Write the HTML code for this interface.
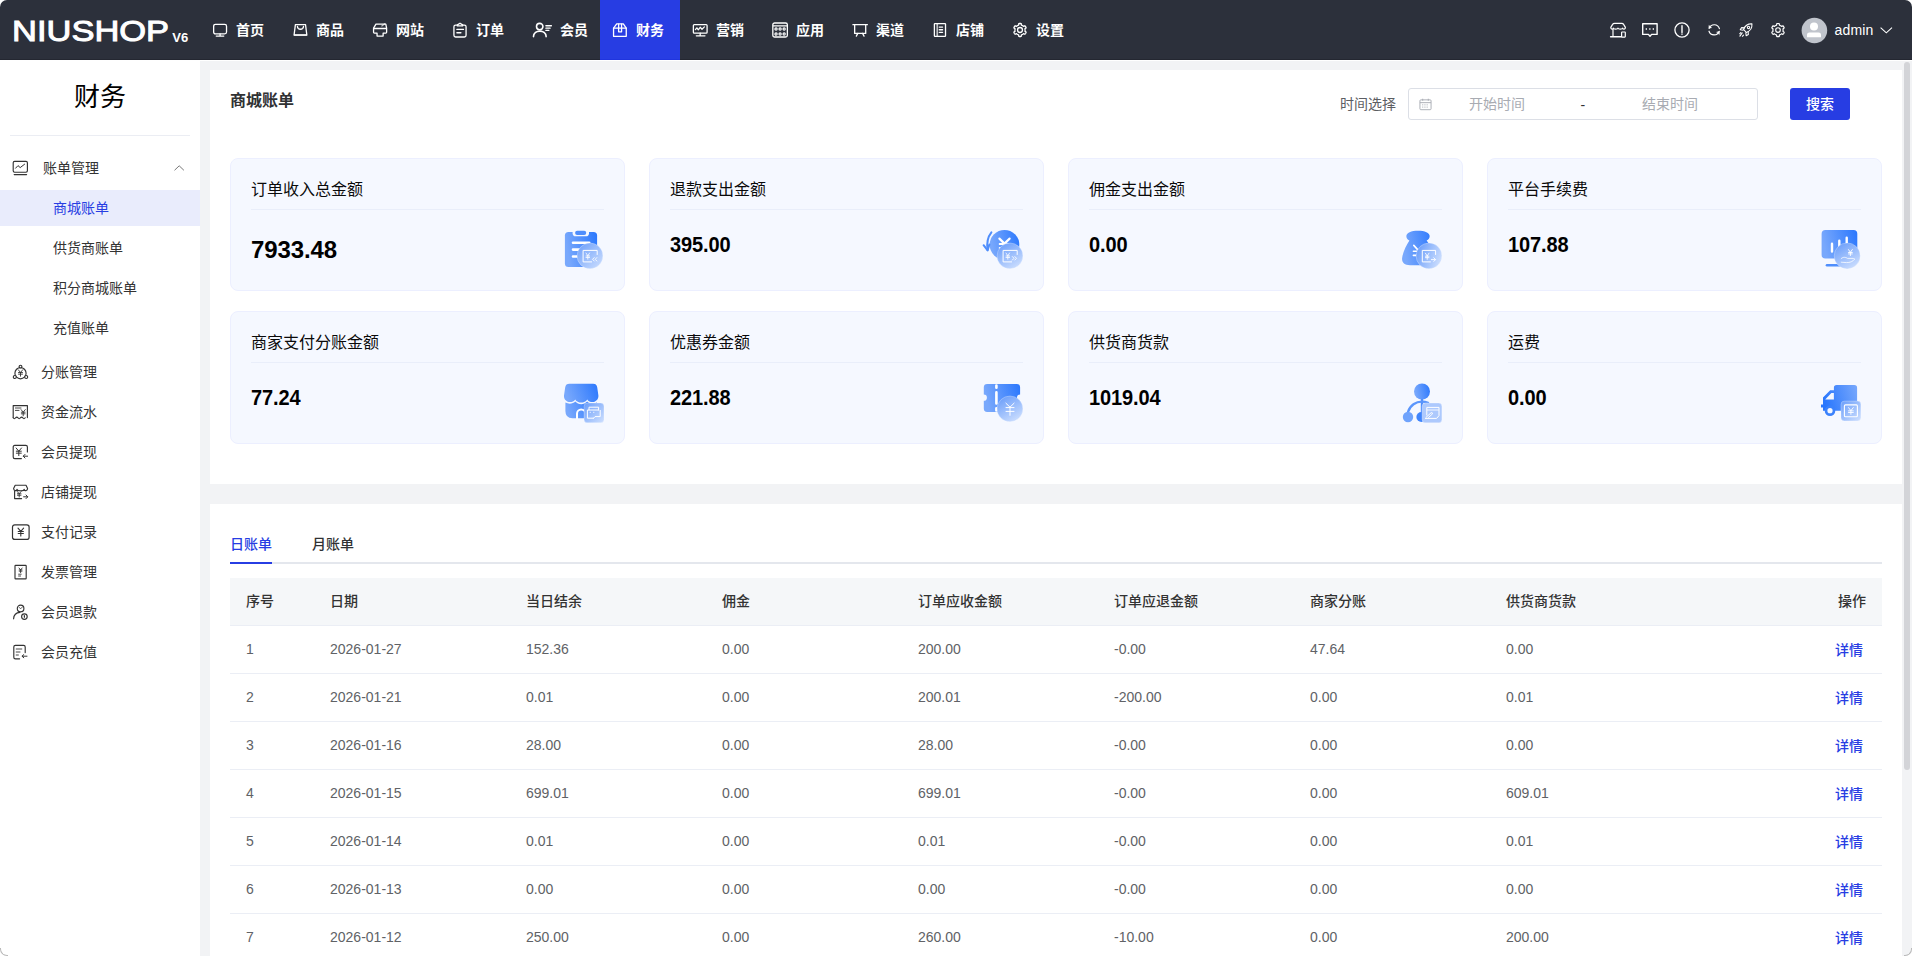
<!DOCTYPE html>
<html lang="zh-CN">
<head>
<meta charset="utf-8">
<title>商城账单</title>
<style>
*{box-sizing:border-box;margin:0;padding:0}
html,body{width:1912px;height:956px;overflow:hidden;background:#fff}
body{font-family:"Liberation Sans","Noto Sans CJK SC",sans-serif;font-size:14px;color:#333;position:relative}
#app{position:absolute;left:0;top:0;width:1912px;height:956px;background:#fff;border-radius:7px;overflow:hidden}
/* top nav */
#top{position:absolute;left:0;top:0;width:1912px;height:60px;background:#2c303b;border-bottom:1px solid #242731;z-index:5}
#logo{position:absolute;left:0;top:0}
.nav{position:absolute;top:0;height:59px;width:80px;color:#fff;font-weight:700;font-size:14px;line-height:60px}
.nav.on{background:#273de3;height:60px;border-bottom:1px solid #2035de}
.nav svg{position:absolute;left:12px;top:22px;width:16px;height:16px;fill:none;stroke:#fff;stroke-width:1.42;stroke-linecap:round;stroke-linejoin:round}
.nav span{position:absolute;left:36px;top:0;white-space:nowrap}
.ti{position:absolute;top:20px;width:20px;height:20px;fill:none;stroke:#fff;stroke-width:1.2;stroke-linecap:round;stroke-linejoin:round}
/* sidebar */
#side{position:absolute;left:0;top:60px;width:200px;height:896px;background:#fff}
#side h2{position:absolute;left:0;top:18px;width:200px;text-align:center;font-size:26px;font-weight:400;color:#000;line-height:38px}
#side .hr{position:absolute;left:10px;top:75px;width:180px;height:1px;background:#ebedf3}
.m{position:absolute;left:0;width:200px;height:40px;line-height:40px;font-size:14px;color:#333}
.m span{position:absolute;left:41px;top:0;white-space:nowrap}
.m svg{position:absolute;left:12px;top:12px;width:16px;height:16px;fill:none;stroke:#333;stroke-width:1.15;stroke-linecap:round;stroke-linejoin:round}
.s{position:absolute;left:0;width:200px;height:36px;line-height:36px;font-size:14px;color:#333}
.s span{position:absolute;left:53px;top:0;white-space:nowrap}
.s.on{background:#e9ecfc;color:#273de3}
/* main */
.panel{position:absolute;left:210px;width:1692px;background:#fff}

.tab{position:absolute;height:40px;line-height:40px;font-size:14px;font-weight:500;color:#303133;white-space:nowrap}
.tab.on{color:#273de3}
table{position:absolute;border-collapse:collapse;table-layout:fixed;width:1652px}
th{height:47px;padding-bottom:2px !important;background:#f5f7f9;font-weight:500;color:#333;text-align:left;padding:0 16px;font-size:14px;border-bottom:1px solid #ebeef5}
td{height:48px;color:#606266;text-align:left;padding:0 16px;font-size:14px;border-bottom:1px solid #ebeef5}
th.r,td.r{text-align:right}
td a{color:#273de3;font-weight:500;margin-right:3px}

.card{position:absolute;width:395px;height:133px;background:#f5f8ff;border:1px solid #ecefff;border-radius:8px}
.ct{position:absolute;left:20px;top:19px;font-size:16px;line-height:24px;color:#0a0a0a;white-space:nowrap}
.cl{position:absolute;left:20px;top:50px;width:353px;height:1px;background:#e9eefa}
.cv{position:absolute;left:20px;top:70px;font-size:20px;font-weight:700;line-height:32px;color:#000;white-space:nowrap}
.cv{transform:scaleY(1.075);transform-origin:0 23px;letter-spacing:-.1px}
.cv.big{font-size:24px;top:75px;transform:scaleY(1.02);transform-origin:0 24.5px}
.ci{position:absolute;left:331px;top:69px;width:44px;height:44px;overflow:visible}
</style>
</head>
<body>
<div id="app">
<div id="top"><svg id="logo" width="200" height="60" viewBox="0 0 200 60"><text x="12.1" y="40.5" font-family="Liberation Sans, sans-serif" font-size="29" fill="#fff" stroke="#fff" stroke-width="0.95" stroke-linejoin="miter" textLength="157" lengthAdjust="spacingAndGlyphs">NIUSHOP</text><text x="172.3" y="41.6" font-family="Liberation Sans, sans-serif" font-size="13.5" font-weight="700" fill="#fff" textLength="16" lengthAdjust="spacingAndGlyphs">V6</text></svg>
<div class="nav" style="left:200px"><svg viewBox="0 0 16 16" style="overflow:visible"><g transform="translate(8 8) scale(.92) translate(-8 -8)"><rect x="1.1" y="1.9" width="14" height="10.4" rx="2"/><path d="M8.1 12.3V14.6M3.9 14.6H12.1"/></g></svg><span>首页</span></div>
<div class="nav" style="left:280px"><svg viewBox="0 0 16 16" style="overflow:visible"><g transform="translate(8 8) scale(.92) translate(-8 -8)"><path d="M3 2.2H14L15.4 13.2H1.6Z"/><path d="M1.8 13.6H15.2" stroke-width="1.6" opacity=".8"/><path d="M5.200 4.200C5.600 8.200 11.400 8.200 11.800 4.200"/></g></svg><span>商品</span></div>
<div class="nav" style="left:360px"><svg viewBox="0 0 16 16" style="overflow:visible"><g transform="translate(8 8) scale(.92) translate(-8 -8)"><path d="M3.6 1.6H14.3L15.2 6V10.5Q15.2 11.4 14.3 11.4H11.4V14.6H4.8V11.4H1.9Q1 11.4 1 10.5V6Z"/><path d="M1.2 6.4H15"/><path d="M10 3.6L13.2 1.2" opacity=".7"/></g></svg><span>网站</span></div>
<div class="nav" style="left:440px"><svg viewBox="0 0 16 16" style="overflow:visible"><g transform="translate(8 8) scale(.92) translate(-8 -8)"><path d="M5.2 2.6H3.2Q1.4 2.6 1.4 4.4V13.8Q1.4 15.6 3.2 15.6H12.8Q14.6 15.6 14.6 13.8V4.4Q14.6 2.6 12.8 2.6H10.8"/><path d="M5.2 3.6V2.4L8 0.6L10.8 2.4V3.6Z"/><path d="M4.6 7.4H11.8M4.6 11H9"/></g></svg><span>订单</span></div>
<div class="nav" style="left:520px"><svg viewBox="0 0 16 16" style="overflow:visible"><g transform="translate(8 8) scale(.92) translate(-8 -8)"><circle cx="7.700" cy="4.300" r="3.500" stroke-width="1.700"/><path d="M0.900 15.200C1.200 7.200 14.400 7.200 14.700 15.200" stroke-width="1.700"/><path d="M14.4 3.4H20.4M14.4 6H19M14.4 8.5H17.6"/></g></svg><span style="left:40px">会员</span></div>
<div class="nav on" style="left:600px"><svg viewBox="0 0 16 16" style="overflow:visible"><g transform="translate(8 8) scale(.92) translate(-8 -8)"><path d="M1 6L4.4 1.4H11.6L14.8 6V14.9H1Z"/><path d="M1 6H14.8"/><path d="M6.5 1.6V10H9.7V1.6"/></g></svg><span>财务</span></div>
<div class="nav" style="left:680px"><svg viewBox="0 0 16 16" style="overflow:visible"><g transform="translate(8 8) scale(.92) translate(-8 -8)"><rect x="0.8" y="2.2" width="14.9" height="9.2" rx="1"/><path d="M8.2 11.4V14.2M4 14.3H13.4"/><path d="M3 7.600L4.600 5.600L6.200 7.800L8.200 5L10.200 7.200L12.800 4.600" stroke-width="1.350"/></g></svg><span>营销</span></div>
<div class="nav" style="left:760px"><svg viewBox="0 0 16 16" style="overflow:visible"><g transform="translate(8 8) scale(.92) translate(-8 -8)"><rect x="0.2" y="0.4" width="15.8" height="15.2" rx="2"/><path d="M1 3.6H15.2"/><g stroke-width="1.300"><circle cx="3.7" cy="6.9" r="1.2"/><circle cx="8.1" cy="6.9" r="1.2"/><circle cx="12.5" cy="6.9" r="1.2"/><circle cx="3.7" cy="12.3" r="1.2"/><circle cx="8.1" cy="12.3" r="1.2"/><circle cx="12.5" cy="12.3" r="1.2"/></g></g></svg><span>应用</span></div>
<div class="nav" style="left:840px"><svg viewBox="0 0 16 16" style="overflow:visible"><g transform="translate(8 8) scale(.92) translate(-8 -8)"><path d="M0.3 2.2H16"/><path d="M2.2 2.2V11.7H14.2V2.2"/><path d="M5.6 11.7L4 14.6M10.8 11.7L12.4 14.6"/></g></svg><span>渠道</span></div>
<div class="nav" style="left:920px"><svg viewBox="0 0 16 16" style="overflow:visible"><g transform="translate(8 8) scale(.92) translate(-8 -8)"><rect x="1.9" y="1" width="12.1" height="13.9" rx="0.6"/><path d="M5 1.2V14.8" stroke-width="1.8" opacity=".7"/><path d="M7.2 4.8H10.8M7.2 7.7H10.8M7.2 10.5H10.8"/></g></svg><span>店铺</span></div>
<div class="nav" style="left:1000px"><svg viewBox="0 0 16 16" style="overflow:visible"><g transform="translate(8 8) scale(.92) translate(-8 -8)"><path d="M8.00,0.90 L8.46,0.92 L8.93,0.96 L9.36,1.15 L9.46,2.54 L9.77,2.79 L10.10,2.92 L10.43,3.07 L10.75,3.24 L11.06,3.43 L11.35,3.64 L11.63,3.86 L12.00,4.00 L13.25,3.40 L13.63,3.68 L13.90,4.06 L14.15,4.45 L14.37,4.86 L14.56,5.28 L14.61,5.76 L13.46,6.54 L13.39,6.93 L13.45,7.28 L13.49,7.64 L13.50,8.00 L13.49,8.36 L13.45,8.72 L13.39,9.07 L13.46,9.46 L14.61,10.24 L14.56,10.72 L14.37,11.14 L14.15,11.55 L13.90,11.94 L13.63,12.32 L13.25,12.60 L12.00,12.00 L11.63,12.14 L11.35,12.36 L11.06,12.57 L10.75,12.76 L10.43,12.93 L10.10,13.08 L9.77,13.21 L9.46,13.46 L9.36,14.85 L8.93,15.04 L8.46,15.08 L8.00,15.10 L7.54,15.08 L7.07,15.04 L6.64,14.85 L6.54,13.46 L6.23,13.21 L5.90,13.08 L5.57,12.93 L5.25,12.76 L4.94,12.57 L4.65,12.36 L4.37,12.14 L4.00,12.00 L2.75,12.60 L2.37,12.32 L2.10,11.94 L1.85,11.55 L1.63,11.14 L1.44,10.72 L1.39,10.24 L2.54,9.46 L2.61,9.07 L2.55,8.72 L2.51,8.36 L2.50,8.00 L2.51,7.64 L2.55,7.28 L2.61,6.93 L2.54,6.54 L1.39,5.76 L1.44,5.28 L1.63,4.86 L1.85,4.45 L2.10,4.06 L2.37,3.68 L2.75,3.40 L4.00,4.00 L4.37,3.86 L4.65,3.64 L4.94,3.43 L5.25,3.24 L5.57,3.07 L5.90,2.92 L6.23,2.79 L6.54,2.54 L6.64,1.15 L7.07,0.96 L7.54,0.92Z"/><circle cx="8" cy="8" r="2.7"/></g></svg><span>设置</span></div>
<svg class="ti" viewBox="0 0 20 20" style="left:1608px;overflow:visible"><path d="M6.600 3.300H13.700Q15 3.300 15.600 4.400L17.400 7.400C17.400 9.400 14.900 9.600 14.600 8C14.300 9.600 10.300 9.600 10 8C9.700 9.600 5.700 9.600 5.400 8C5.100 9.600 2.800 9.400 2.800 7.400L4.600 4.400Q5.200 3.300 6.600 3.300Z"/><path d="M5 9.400V16.400"/><path d="M2.600 16.700H13.400" stroke-width="1.500"/><rect x="13.600" y="12" width="3.700" height="5.100" rx="0.500"/></svg>
<svg class="ti" viewBox="0 0 20 20" style="left:1640px;overflow:visible"><path d="M2.700 3.700H17.100V14.400H11.600L10 16.200L8.400 14.400H2.700Z" stroke-width="1.400"/><path d="M5.700 8.900H7M9.200 8.900H10.500M12.700 8.900H14" stroke-width="1.500" stroke-linecap="butt"/></svg>
<svg class="ti" viewBox="0 0 20 20" style="left:1672px;overflow:visible"><circle cx="10" cy="10" r="7.100" stroke-width="1.300"/><path d="M10 5.600V12.400M10 14V14.300" stroke-width="1.400"/></svg>
<svg class="ti" viewBox="0 0 20 20" style="left:1704px;overflow:visible"><path d="M5.200 8.200A5.400 5.400 0 0 1 15.400 8.600"/><path d="M15.200 11.400A5.400 5.400 0 0 1 5 11.200"/><path d="M4.900 5.400L4.800 8.500L7.600 7.700Z" fill="#fff" stroke-width=".3"/><path d="M15.400 14.400L15.500 11.300L12.700 12.100Z" fill="#fff" stroke-width=".3"/></svg>
<svg class="ti" viewBox="0 0 20 20" style="left:1736px;overflow:visible"><g transform="translate(10 10) scale(.9) translate(-10 -10)"><path d="M16.600 3.200C12.600 3 8.800 5.400 7.200 9.400L10.600 12.800C14.600 11.200 16.900 7.400 16.600 3.200Z"/><circle cx="12.800" cy="7.200" r="1.300"/><path d="M8.400 7.600L5 7.400L3.600 9.800L6.800 10.200"/><path d="M12.400 11.600L12.600 15L10.200 16.400L9.800 13.200"/><path d="M5.800 13.200L3.200 16.800M4.200 12.800L3 14.200M7.200 15.600L6 17"/></g></svg>
<svg class="ti" viewBox="0 0 20 20" style="left:1768px;overflow:visible"><path d="M10.00,3.50 L10.43,3.51 L10.86,3.56 L11.27,3.74 L11.36,5.04 L11.64,5.27 L11.95,5.39 L12.26,5.53 L12.55,5.68 L12.83,5.86 L13.10,6.05 L13.36,6.27 L13.71,6.39 L14.88,5.82 L15.24,6.08 L15.49,6.43 L15.72,6.80 L15.92,7.18 L16.10,7.57 L16.15,8.01 L15.06,8.74 L15.00,9.11 L15.06,9.43 L15.09,9.77 L15.10,10.10 L15.09,10.43 L15.06,10.77 L15.00,11.09 L15.06,11.46 L16.15,12.19 L16.10,12.63 L15.92,13.02 L15.72,13.40 L15.49,13.77 L15.24,14.12 L14.88,14.38 L13.71,13.81 L13.36,13.93 L13.10,14.15 L12.83,14.34 L12.55,14.52 L12.26,14.67 L11.95,14.81 L11.64,14.93 L11.36,15.16 L11.27,16.46 L10.86,16.64 L10.43,16.69 L10.00,16.70 L9.57,16.69 L9.14,16.64 L8.73,16.46 L8.64,15.16 L8.36,14.93 L8.05,14.81 L7.74,14.67 L7.45,14.52 L7.17,14.34 L6.90,14.15 L6.64,13.93 L6.29,13.81 L5.12,14.38 L4.76,14.12 L4.51,13.77 L4.28,13.40 L4.08,13.02 L3.90,12.63 L3.85,12.19 L4.94,11.46 L5.00,11.09 L4.94,10.77 L4.91,10.43 L4.90,10.10 L4.91,9.77 L4.94,9.43 L5.00,9.11 L4.94,8.74 L3.85,8.01 L3.90,7.57 L4.08,7.18 L4.28,6.80 L4.51,6.43 L4.76,6.08 L5.12,5.82 L6.29,6.39 L6.64,6.27 L6.90,6.05 L7.17,5.86 L7.45,5.68 L7.74,5.53 L8.05,5.39 L8.36,5.27 L8.64,5.04 L8.73,3.74 L9.14,3.56 L9.57,3.51Z"/><circle cx="10" cy="10.100" r="2.300" stroke-width="1.100"/></svg>
<svg style="position:absolute;left:1801px;top:17px" width="27" height="27" viewBox="0 0 27 27"><circle cx="13.4" cy="13.5" r="12.8" fill="#c0c4cc"/><circle cx="13" cy="9.6" r="4" fill="#fff"/><path d="M6 20.2V17.8Q6 15.4 8.4 15.4H17.6Q20 15.4 20 17.8V20.2Z" fill="#fff"/></svg>
<div style="position:absolute;left:1834.5px;top:0;line-height:61.500px;font-size:14px;letter-spacing:.18px;color:#fff;height:60px">admin</div>
<svg style="position:absolute;left:1879px;top:24px" width="14" height="12" viewBox="0 0 14 12"><path d="M1.6 3.6L7.3 8.8L13 3.6" fill="none" stroke="#fff" stroke-width="1.1"/></svg></div>
<div style="position:absolute;left:200px;top:61px;width:1712px;height:895px;background:#f2f3f5"></div>
<div id="side"><h2>财务</h2><div class="hr"></div>
<div class="m" style="top:87.6px"><svg viewBox="0 0 16 16" style="overflow:visible"><rect x="1.2" y="1.4" width="14.2" height="10.8" rx="1.4"/><path d="M2.2 14.6H14.6"/><path d="M3.6 8.2L6 5.6L8.2 7.6L12.6 4.2" stroke-width="1"/></svg><span style="left:43px">账单管理</span><svg style="left:173px;top:14px;width:12px;height:12px;stroke:#777;stroke-width:1" viewBox="0 0 12 12"><path d="M1.800 8L6.200 3.800L10.600 8"/></svg></div>
<div class="s on" style="top:130px"><span>商城账单</span></div>
<div class="s" style="top:170px"><span>供货商账单</span></div>
<div class="s" style="top:210px"><span>积分商城账单</span></div>
<div class="s" style="top:250px"><span>充值账单</span></div>
<div class="m" style="top:291.5px"><svg viewBox="0 0 16 16" style="overflow:visible"><circle cx="8.5" cy="9.2" r="5.6"/><circle cx="8.5" cy="2.6" r="1.4" fill="#fff"/><circle cx="2.8" cy="13" r="1.5" fill="#fff"/><circle cx="14.2" cy="13" r="1.5" fill="#fff"/><path d="M6.3 5.8L8.5 8.488L10.7 5.8M8.5 8.488V12.2M6.5 8.488H10.5M6.5 10.152000000000001H10.5" stroke-width="0.9"/></svg><span>分账管理</span></div>
<div class="m" style="top:331.5px"><svg viewBox="0 0 16 16" style="overflow:visible"><path d="M1.2 13.6V1.6H15.4V13.6"/><path d="M1.2 13.8Q2.4 15.6 3.6 13.8Q4.8 12.4 6 13.8Q7.2 15.6 8.4 13.8Q9.6 12.4 10.8 13.8Q12 15.6 13.2 13.8"/><path d="M3.4 4H9M3.4 6.4H7" stroke-width=".9"/><path d="M9.1 5.6L11.2 8.204L13.299999999999999 5.6M11.2 8.204V11.8M9.299999999999999 8.204H13.1M9.299999999999999 9.815999999999999H13.1" stroke-width="0.9"/></svg><span>资金流水</span></div>
<div class="m" style="top:372px"><svg viewBox="0 0 16 16" style="overflow:visible"><path d="M15.4 8V3Q15.4 1.4 13.8 1.4H2.8Q1.2 1.4 1.2 3V13Q1.2 14.6 2.8 14.6H9.4"/><path d="M4.1 4L6.8 7.192L9.5 4M6.8 7.192V11.6M4.3 7.192H9.3M4.3 9.168H9.3" stroke-width="1"/><path d="M15.6 12.2H11.4M13 10.4L11.2 12.2L13 14" stroke-width="1"/></svg><span>会员提现</span></div>
<div class="m" style="top:412px"><svg viewBox="0 0 16 16" style="overflow:visible"><path d="M3.2 1.2H14L15.6 4.6C15.6 7.2 12.4 7.2 12.2 5.4C12 7.2 5.2 7.2 5 5.4C4.8 7.2 1.6 7.2 1.6 4.6Z"/><path d="M2.6 7V14.6H9.6"/><path d="M5.2 7.4L7.2 9.752L9.2 7.4M7.2 9.752V13.0M5.4 9.752H9.0M5.4 11.208H9.0" stroke-width="0.9"/><path d="M11.6 12.8H15.6M14 11L15.8 12.8L14 14.6" stroke-width="1"/></svg><span>店铺提现</span></div>
<div class="m" style="top:452px"><svg viewBox="0 0 16 16" style="overflow:visible"><rect x="0.5" y="0.8" width="16.6" height="14.6" rx="2.2" stroke-width="1.2"/><path d="M6.000000000000001 4.2L8.8 7.476L11.600000000000001 4.2M8.8 7.476V12.0M6.200000000000001 7.476H11.400000000000002M6.200000000000001 9.504000000000001H11.400000000000002" stroke-width="1.1"/></svg><span>支付记录</span></div>
<div class="m" style="top:491.5px"><svg viewBox="0 0 16 16" style="overflow:visible"><rect x="3" y="1.4" width="11.2" height="13.4" rx=".6"/><path d="M7.0 4L8.6 5.9319999999999995L10.2 4M8.6 5.9319999999999995V8.6M7.2 5.9319999999999995H10.0M7.2 7.128H10.0" stroke-width="0.9"/><path d="M6.6 10.2H9.2M6.6 12H8.6" stroke-width=".9"/></svg><span>发票管理</span></div>
<div class="m" style="top:532px"><svg viewBox="0 0 16 16" style="overflow:visible"><circle cx="8.6" cy="4.4" r="3.3"/><path d="M7.2 3.4L8.6 4.8L10.6 2.8" stroke-width=".8"/><path d="M1.6 14.8C1.8 10.6 4.6 8.6 8 8.4"/><circle cx="12.4" cy="12.6" r="2.8"/><path d="M12.4 11.6V13.2" stroke-width="1.2"/></svg><span>会员退款</span></div>
<div class="m" style="top:572px"><svg viewBox="0 0 16 16" style="overflow:visible"><path d="M13.2 8.6V3Q13.2 1.4 11.6 1.4H3.4Q1.8 1.4 1.8 3V13.2Q1.8 14.8 3.4 14.8H7.6"/><path d="M4.2 5H9.8M4.2 8H8M4.2 11H6.4" stroke-width=".9"/><path d="M15 12.2H10.2M11.8 10.6L10 12.2L11.8 13.8" stroke-width="1"/></svg><span>会员充值</span></div></div>
<div class="panel" id="p1" style="top:70px;height:414px"><div style="position:absolute;left:20px;top:19px;font-size:16px;font-weight:700;color:#303133;line-height:24px;white-space:nowrap">商城账单</div>
<div style="position:absolute;left:1130px;top:18px;font-size:14px;color:#5c5e63;line-height:32px;white-space:nowrap">时间选择</div>
<div style="position:absolute;left:1198px;top:18px;width:350px;height:32px;border:1px solid #dcdfe6;border-radius:3px;background:#fff;font-size:14px;line-height:30px;color:#a8abb2"><svg style="position:absolute;left:9.5px;top:8.500px" width="13" height="13" viewBox="0 0 14 14" fill="none" stroke="#a8abb2" stroke-width="1"><rect x="1" y="2" width="12" height="10.6" rx="1"/><path d="M1 5H13M4 .8V3M10 .8V3"/><path d="M3.4 7.4H10.6M3.4 9.8H10.6" stroke-dasharray="1.2 1.2"/></svg><span style="position:absolute;left:60px;top:0">开始时间</span><span style="position:absolute;left:171.500px;top:0.500px;color:#303133">-</span><span style="position:absolute;left:233px;top:0">结束时间</span></div>
<div style="position:absolute;left:1580px;top:18px;width:60px;height:32px;border-radius:3px;background:#273de3;color:#fff;font-size:14px;font-weight:500;line-height:32px;text-align:center">搜索</div>
<div class="card" style="left:20px;top:88px"><div class="ct">订单收入总金额</div><div class="cl"></div><div class="cv big">7933.48</div><svg class="ci" viewBox="0 0 44 44"><defs><linearGradient id="m0" x1="0" y1="0.2" x2="1" y2="0"><stop offset="0" stop-color="#78a8fc"/><stop offset="1" stop-color="#2a77fd"/></linearGradient><linearGradient id="s0" x1="0" y1="0" x2="1" y2="1"><stop offset="0" stop-color="#6b9efa"/><stop offset="1" stop-color="#cfe0fe"/></linearGradient></defs><rect x="2.9" y="3.9" width="32.2" height="35.2" rx="3.6" fill="url(#m0)"/><path d="M10.6 3.5H27V5.2Q27 8.3 23.9 8.3H13.7Q10.6 8.3 10.6 5.2Z" fill="#f5f8ff"/><rect x="13.1" y="2.8" width="11.1" height="4.1" rx="2" fill="#4f8efc"/><path d="M11 14.7H27.2M11 21.6H24M11 28.5H20" fill="none" stroke="#fff" stroke-linecap="round" stroke-linejoin="round" stroke-width="2.6"/><circle cx="28" cy="27.9" r="12.9" fill="url(#s0)" stroke="#fff" stroke-opacity=".35" stroke-width=".8"/><path d="M35.2 26.5V22.4H21.1V33.9H29.6" fill="none" stroke="#fff" stroke-linecap="round" stroke-linejoin="round" stroke-width="1"/><path d="M24 25L25.8 27.79L27.6 25M25.8 27.79V31.2M24 27.99H27.6M24 29.464H27.6" fill="none" stroke="#fff" stroke-width="1" stroke-linecap="round" opacity="0.8"/><path d="M32.2 29.6L30.6 31.3L32.2 33M34.8 29.6L33.2 31.3L34.8 33" fill="none" stroke="#fff" stroke-linecap="round" stroke-linejoin="round" stroke-width=".9"/></svg></div>
<div class="card" style="left:439px;top:88px"><div class="ct">退款支出金额</div><div class="cl"></div><div class="cv">395.00</div><svg class="ci" viewBox="0 0 44 44"><defs><linearGradient id="m1" x1="0" y1="0.2" x2="1" y2="0"><stop offset="0" stop-color="#78a8fc"/><stop offset="1" stop-color="#2a77fd"/></linearGradient><linearGradient id="s1" x1="0.2" y1="0" x2="0.8" y2="1"><stop offset="0" stop-color="#6b9efa"/><stop offset="1" stop-color="#cfe0fe"/></linearGradient></defs><circle cx="23.5" cy="16.7" r="14.8" fill="url(#m1)"/><path d="M10.4 4.4C6.6 9.2 5.6 15.6 6.6 22" fill="none" stroke="#4f8efc" stroke-width="2" stroke-linecap="round"/><path d="M2.6 17.2L6.6 22.4L8.4 16.4" fill="none" stroke="#4f8efc" stroke-width="2" stroke-linecap="round" stroke-linejoin="round"/><path d="M18.4 10.6L23.5 15.6L28.6 10.6M23.5 15.6V24M18.8 16H28.2M18.8 20H28.2" fill="none" stroke="#fff" stroke-linecap="round" stroke-linejoin="round" stroke-width="2.2"/><circle cx="29" cy="27.9" r="12.9" fill="url(#s1)" stroke="#fff" stroke-opacity=".35" stroke-width=".8"/><path d="M36.2 26.5V22.4H22.1V33.9H30.6" fill="none" stroke="#fff" stroke-linecap="round" stroke-linejoin="round" stroke-width="1"/><path d="M25 25L26.8 27.79L28.6 25M26.8 27.79V31.2M25 27.99H28.6M25 29.464H28.6" fill="none" stroke="#fff" stroke-width="1" stroke-linecap="round" opacity="0.8"/><path d="M31.4 28.6L33 30.3L31.4 32M33.9 28.6L35.5 30.3L33.9 32" fill="none" stroke="#fff" stroke-linecap="round" stroke-linejoin="round" stroke-width=".9"/></svg></div>
<div class="card" style="left:858px;top:88px"><div class="ct">佣金支出金额</div><div class="cl"></div><div class="cv">0.00</div><svg class="ci" viewBox="0 0 44 44"><defs><linearGradient id="m2" x1="0" y1="0.2" x2="1" y2="0"><stop offset="0" stop-color="#78a8fc"/><stop offset="1" stop-color="#2a77fd"/></linearGradient><linearGradient id="s2" x1="0" y1="0.3" x2="1" y2="0.7"><stop offset="0" stop-color="#6b9efa"/><stop offset="1" stop-color="#cfe0fe"/></linearGradient></defs><path d="M9.4 12.6C5.2 10.6 5.4 5.6 9.6 4.2C13.6 2.4 22.4 2.4 26.4 4.2C30.6 5.6 30.8 10.6 26.6 12.6C30 17 34 24 34 30C34 35 31 37.2 26 37.2H10C4 37.2 1.4 34 2.2 29.4C3 24 6.4 17 9.4 12.6Z" fill="url(#m2)"/><path d="M13.8 17.4L17.4 21.4M13.4 23.2H17.6M13.4 27.4H17.6" fill="none" stroke="#fff" stroke-linecap="round" stroke-linejoin="round" stroke-width="1.6"/><circle cx="29" cy="27.9" r="12.9" fill="url(#s2)" stroke="#fff" stroke-opacity=".35" stroke-width=".8"/><path d="M35.6 26.5V22.4H22.3V33.9H30.4" fill="none" stroke="#fff" stroke-linecap="round" stroke-linejoin="round" stroke-width="1"/><path d="M25.4 25.2L27.2 27.99L29 25.2M27.2 27.99V31.4M25.4 28.19H29M25.4 29.664H29" fill="none" stroke="#fff" stroke-width="1" stroke-linecap="round" opacity="0.85"/><path d="M31.4 31.6H35.4M33.8 29.8L35.6 31.6L33.8 33.4" fill="none" stroke="#fff" stroke-linecap="round" stroke-linejoin="round" stroke-width=".9"/></svg></div>
<div class="card" style="left:1277px;top:88px"><div class="ct">平台手续费</div><div class="cl"></div><div class="cv">107.88</div><svg class="ci" viewBox="0 0 44 44"><defs><linearGradient id="m3" x1="0" y1="0.2" x2="1" y2="0"><stop offset="0" stop-color="#78a8fc"/><stop offset="1" stop-color="#2a77fd"/></linearGradient><linearGradient id="s3" x1="0.2" y1="0" x2="0.8" y2="1"><stop offset="0" stop-color="#6b9efa"/><stop offset="1" stop-color="#cfe0fe"/></linearGradient></defs><rect x="2.6" y="2.1" width="35.7" height="28.4" rx="3.8" fill="url(#m3)"/><path d="M8 37.2H22" stroke="#4f8efc" stroke-width="2.6" stroke-linecap="round"/><path d="M13 15.8V23.6M20.3 12.8V22M27.7 9.8V20" fill="none" stroke="#fff" stroke-linecap="round" stroke-linejoin="round" stroke-width="2.4"/><circle cx="28.2" cy="27.9" r="13" fill="url(#s3)" stroke="#fff" stroke-opacity=".35" stroke-width=".8"/><path d="M29.5 21.6L31.4 24.3L33.3 21.6M31.4 24.3V27.6M29.5 24.5H33.3M29.5 25.92H33.3" fill="none" stroke="#fff" stroke-width="1" stroke-linecap="round" opacity="0.9"/><path d="M22.2 30.6C24.4 28.4 27 29.4 28.6 30.4H33C35.4 30.4 35.8 31 35.8 31C34 33.6 30.6 34.8 27.4 34.6L22.2 34.2" fill="none" stroke="#fff" stroke-linecap="round" stroke-linejoin="round" stroke-width=".9" opacity=".85"/></svg></div>
<div class="card" style="left:20px;top:241px"><div class="ct">商家支付分账金额</div><div class="cl"></div><div class="cv">77.24</div><svg class="ci" viewBox="0 0 44 44"><defs><linearGradient id="m4" x1="0" y1="0.2" x2="1" y2="0"><stop offset="0" stop-color="#78a8fc"/><stop offset="1" stop-color="#2a77fd"/></linearGradient><linearGradient id="s4" x1="0" y1="0" x2="1" y2="1"><stop offset="0" stop-color="#6b9efa"/><stop offset="1" stop-color="#cfe0fe"/></linearGradient></defs><path d="M7.4 2.8H31.2Q34.6 2.8 35.2 6.2L36.4 14.4C36.8 21 28.6 23.2 25.2 18.4C22.6 22.6 15.8 22.6 13.2 18.4C9.8 23.2 1.4 21 2 14.4L3.2 6.200Q3.800 2.800 7.400 2.800Z" transform="translate(0,0)" fill="url(#m4)"/><path d="M3.4 21.6C7 23.6 11 22.8 13.2 20.6C16.2 24 22.2 24 25.2 20.6C27.4 22.8 31.4 23.6 35 21.6V30Q35 37.2 28 37.2H10.4Q3.4 37.2 3.4 30Z" fill="url(#m4)"/><path d="M15 37.2V32.8A4.2 4.2 0 0 1 23.4 32.800V37.2" fill="none" stroke="#fff" stroke-linecap="round" stroke-linejoin="round" stroke-width="2"/><rect x="22.1" y="22" width="19.9" height="19.8" rx="3.4" fill="url(#s4)" stroke="#fff" stroke-opacity=".35" stroke-width=".8"/><path d="M27 29V26.200H36.600V29M36.400 29H25.400V37.200H31.600M31.600 37.200L33 35.600H38.200V29.400" fill="none" stroke="#fff" stroke-linecap="round" stroke-linejoin="round" stroke-width="1"/><path d="M27.6 31.4H29M31 31.4H32.400" stroke="#fff" stroke-width="1.2" opacity=".6"/></svg></div>
<div class="card" style="left:439px;top:241px"><div class="ct">优惠券金额</div><div class="cl"></div><div class="cv">221.88</div><svg class="ci" viewBox="0 0 44 44"><defs><linearGradient id="m5" x1="0" y1="0.2" x2="1" y2="0"><stop offset="0" stop-color="#78a8fc"/><stop offset="1" stop-color="#2a77fd"/></linearGradient><linearGradient id="s5" x1="0.2" y1="0" x2="0.8" y2="1"><stop offset="0" stop-color="#6b9efa"/><stop offset="1" stop-color="#cfe0fe"/></linearGradient></defs><path d="M6.2 2.900H35.700Q39.100 2.900 39.100 6.300V13.600A3.100 3.100 0 0 0 39.100 19.800V27.600Q39.100 31 35.700 31H6.200Q2.800 31 2.800 27.600V19.800A3.100 3.100 0 0 0 2.800 13.600V6.300Q2.800 2.900 6.200 2.900Z" fill="url(#m5)"/><path d="M15.400 4.600V6.800M15.400 11.400V22.400M15.400 27.200V29.400" fill="none" stroke="#fff" stroke-linecap="round" stroke-linejoin="round" stroke-width="2.600"/><circle cx="29" cy="27.900" r="12.900" fill="url(#s5)" stroke="#fff" stroke-opacity=".35" stroke-width=".8"/><path d="M24.900 22.200L29 26.200L33.100 22.200M29 26.200V34.300M25 26.600H33M25 30.400H33" fill="none" stroke="#fff" stroke-linecap="round" stroke-linejoin="round" stroke-width="1"/></svg></div>
<div class="card" style="left:858px;top:241px"><div class="ct">供货商货款</div><div class="cl"></div><div class="cv">1019.04</div><svg class="ci" viewBox="0 0 44 44"><defs><linearGradient id="m6" x1="0" y1="0.2" x2="1" y2="0"><stop offset="0" stop-color="#78a8fc"/><stop offset="1" stop-color="#2a77fd"/></linearGradient><linearGradient id="s6" x1="0" y1="0" x2="1" y2="1"><stop offset="0" stop-color="#6b9efa"/><stop offset="1" stop-color="#cfe0fe"/></linearGradient></defs><circle cx="22" cy="10.500" r="8" fill="url(#m6)"/><path d="M22 18V34" stroke="#4f8efc" stroke-width="2.400"/><path d="M8 31C10 24 16 20.600 22 20.600C24 20.600 26 21 28 21.800" fill="none" stroke="#5b96fc" stroke-width="2.400" stroke-linecap="round"/><circle cx="8" cy="36" r="5.200" fill="#6fa3fc"/><circle cx="21.400" cy="36" r="5" fill="#3f84fc"/><rect x="22.100" y="22" width="19.800" height="19.800" rx="3.400" fill="#adc9fd" stroke="#fff" stroke-opacity=".35" stroke-width=".8"/><path d="M26.800 34V26.400H39V34.600L36.600 37.400H25.400" fill="none" stroke="#fff" stroke-linecap="round" stroke-linejoin="round" stroke-width="1"/><path d="M27 29H38.800" stroke="#fff" stroke-width="1.600" opacity=".55"/><path d="M26 36.400L31 31.800Q32.600 31.200 32.600 32.800L28.600 36.400" fill="none" stroke="#fff" stroke-linecap="round" stroke-linejoin="round" stroke-width="1"/></svg></div>
<div class="card" style="left:1277px;top:241px"><div class="ct">运费</div><div class="cl"></div><div class="cv">0.00</div><svg class="ci" viewBox="0 0 44 44"><defs><linearGradient id="m7" x1="0" y1="0.2" x2="1" y2="0"><stop offset="0" stop-color="#2a77fd"/><stop offset="1" stop-color="#78a8fc"/></linearGradient><linearGradient id="s7" x1="0" y1="0" x2="1" y2="1"><stop offset="0" stop-color="#6b9efa"/><stop offset="1" stop-color="#cfe0fe"/></linearGradient></defs><path d="M14.900 6.700Q14.900 3.900 17.700 3.900H35.300Q38.100 3.900 38.100 6.700V27Q38.100 29.700 35.300 29.700H4Q4 29.700 4 29.500V26.500H2V23.400H4V16.600L11.200 9.200H14.900Z" fill="url(#m7)"/><path d="M6.200 18.400L12.400 12H14.900V18.400Z" fill="#f5f8ff"/><circle cx="11" cy="29.700" r="5.300" fill="#3b82fc"/><circle cx="11" cy="29.700" r="2.600" fill="#f5f8ff"/><rect x="22" y="20.100" width="19.900" height="19.800" rx="3.400" fill="url(#s7)" stroke="#fff" stroke-opacity=".35" stroke-width=".8"/><rect x="25.400" y="23.900" width="13" height="11.800" rx="1" fill="none" stroke="#fff" stroke-linecap="round" stroke-linejoin="round" stroke-width="1.100"/><path d="M29.5 26.6L31.9 29.66L34.3 26.6M31.9 29.66V33.4M29.5 29.86H34.3M29.5 31.496H34.3" fill="none" stroke="#fff" stroke-width="1" stroke-linecap="round" opacity="0.9"/></svg></div></div>
<div class="panel" id="p2" style="top:504px;height:452px"><div class="tab on" style="left:20px;top:20px">日账单</div>
<div class="tab" style="left:102px;top:20px">月账单</div>
<div style="position:absolute;left:20px;top:58px;width:1652px;height:2px;background:#e4e7ed"></div>
<div style="position:absolute;left:20px;top:58px;width:42px;height:2px;background:#273de3"></div>
<table style="left:20px;top:74px"><colgroup><col style="width:84px"><col style="width:196px"><col style="width:196px"><col style="width:196px"><col style="width:196px"><col style="width:196px"><col style="width:196px"><col style="width:196px"><col style="width:196px"></colgroup><thead><tr><th>序号</th><th>日期</th><th>当日结余</th><th>佣金</th><th>订单应收金额</th><th>订单应退金额</th><th>商家分账</th><th>供货商货款</th><th class="r">操作</th></tr></thead><tbody><tr><td>1</td><td>2026-01-27</td><td>152.36</td><td>0.00</td><td>200.00</td><td>-0.00</td><td>47.64</td><td>0.00</td><td class="r"><a>详情</a></td></tr><tr><td>2</td><td>2026-01-21</td><td>0.01</td><td>0.00</td><td>200.01</td><td>-200.00</td><td>0.00</td><td>0.01</td><td class="r"><a>详情</a></td></tr><tr><td>3</td><td>2026-01-16</td><td>28.00</td><td>0.00</td><td>28.00</td><td>-0.00</td><td>0.00</td><td>0.00</td><td class="r"><a>详情</a></td></tr><tr><td>4</td><td>2026-01-15</td><td>699.01</td><td>0.00</td><td>699.01</td><td>-0.00</td><td>0.00</td><td>609.01</td><td class="r"><a>详情</a></td></tr><tr><td>5</td><td>2026-01-14</td><td>0.01</td><td>0.00</td><td>0.01</td><td>-0.00</td><td>0.00</td><td>0.01</td><td class="r"><a>详情</a></td></tr><tr><td>6</td><td>2026-01-13</td><td>0.00</td><td>0.00</td><td>0.00</td><td>-0.00</td><td>0.00</td><td>0.00</td><td class="r"><a>详情</a></td></tr><tr><td>7</td><td>2026-01-12</td><td>250.00</td><td>0.00</td><td>260.00</td><td>-10.00</td><td>0.00</td><td>200.00</td><td class="r"><a>详情</a></td></tr></tbody></table></div>
<div id="sb" style="position:absolute;left:1904px;top:62px;width:6px;height:708px;border-radius:3px;background:#d3d4d8"></div>
</div>
<div style="position:absolute;left:0;top:948px;width:8px;height:8px;border-left:1px solid #b9b9b9;border-bottom:1px solid #b9b9b9;border-bottom-left-radius:7px"></div>
<div style="position:absolute;left:1904px;top:948px;width:8px;height:8px;border-right:1px solid #b9b9b9;border-bottom:1px solid #b9b9b9;border-bottom-right-radius:7px"></div>
</body>
</html>
